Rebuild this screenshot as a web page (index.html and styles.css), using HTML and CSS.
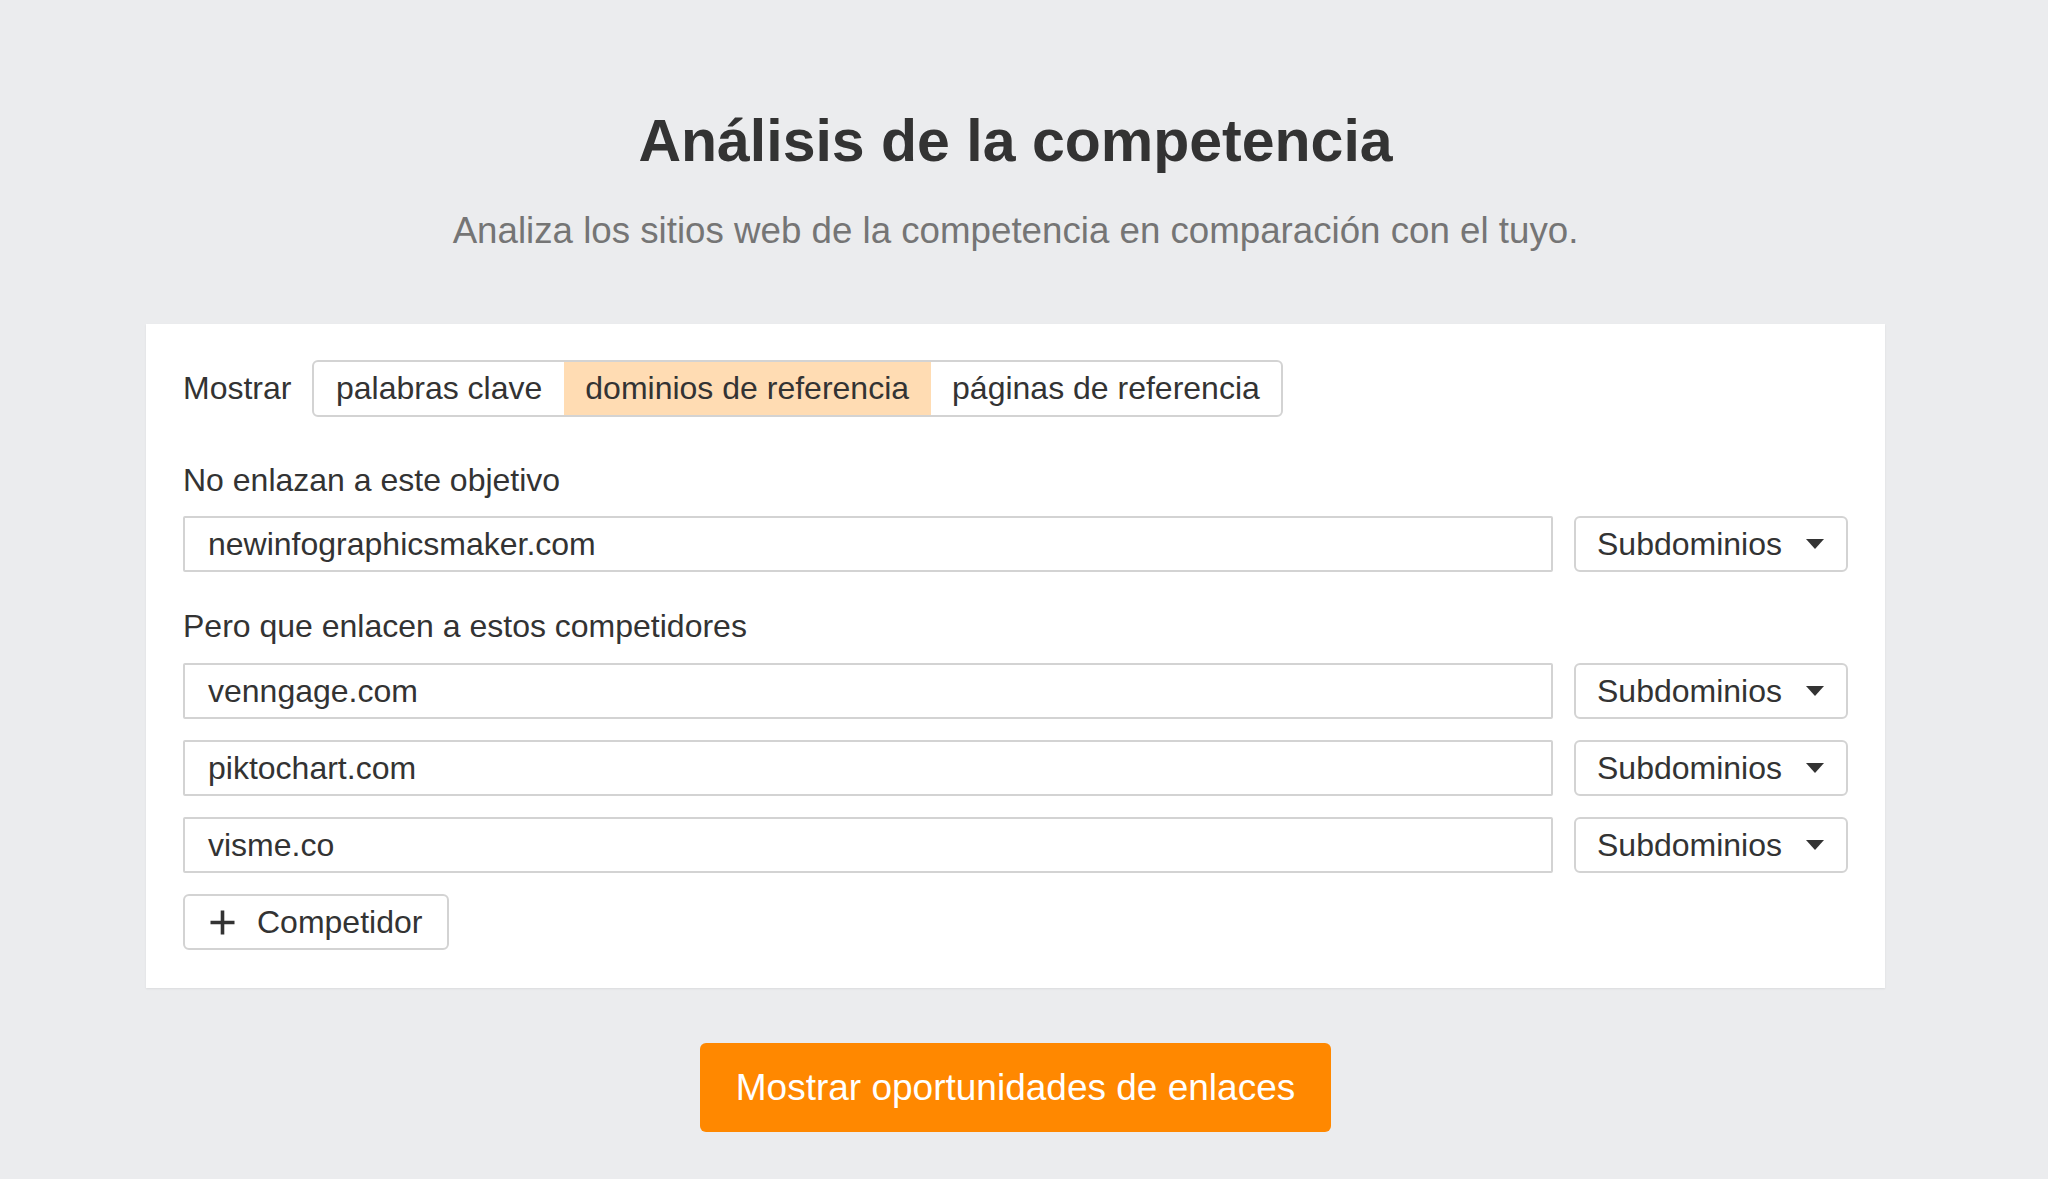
FILE: index.html
```html
<!DOCTYPE html>
<html lang="es">
<head>
<meta charset="utf-8">
<title>Análisis de la competencia</title>
<link rel="stylesheet" href="styles.css">
</head>
<body>
<main class="page">
  <h1 class="title">Análisis de la competencia</h1>
  <p class="subtitle">Analiza los sitios web de la competencia en comparación con el tuyo.</p>

  <section class="card">
    <div class="show-row">
      <span class="show-label">Mostrar</span>
      <div class="tabs">
        <span class="tab">palabras clave</span>
        <span class="tab tab-active">dominios de referencia</span>
        <span class="tab">páginas de referencia</span>
      </div>
    </div>

    <div class="label label-first">No enlazan a este objetivo</div>
    <div class="row">
      <div class="field">newinfographicsmaker.com</div>
      <div class="select">
        <span>Subdominios</span>
        <svg class="caret" width="18" height="10" viewBox="0 0 18 10"><polygon points="0,0 18,0 9,10" fill="#333"/></svg>
      </div>
    </div>

    <div class="label label-second">Pero que enlacen a estos competidores</div>
    <div class="rows">
      <div class="row">
        <div class="field">venngage.com</div>
        <div class="select">
          <span>Subdominios</span>
          <svg class="caret" width="18" height="10" viewBox="0 0 18 10"><polygon points="0,0 18,0 9,10" fill="#333"/></svg>
        </div>
      </div>
      <div class="row">
        <div class="field">piktochart.com</div>
        <div class="select">
          <span>Subdominios</span>
          <svg class="caret" width="18" height="10" viewBox="0 0 18 10"><polygon points="0,0 18,0 9,10" fill="#333"/></svg>
        </div>
      </div>
      <div class="row">
        <div class="field">visme.co</div>
        <div class="select">
          <span>Subdominios</span>
          <svg class="caret" width="18" height="10" viewBox="0 0 18 10"><polygon points="0,0 18,0 9,10" fill="#333"/></svg>
        </div>
      </div>
      <div class="add-row">
        <button class="add-btn" type="button">
          <svg class="plus" width="27" height="27" viewBox="0 0 27 27"><path d="M13.5 1.5v24M1.5 13.5h24" stroke="#333" stroke-width="3.6" fill="none"/></svg>
          <span>Competidor</span>
        </button>
      </div>
    </div>
  </section>

  <button class="cta" type="button">Mostrar oportunidades de enlaces</button>
</main>
</body>
</html>
```

FILE: styles.css
```css
html, body {
  margin: 0;
  padding: 0;
  background: #ebecee;
}

body {
  font-family: "Liberation Sans", Arial, Helvetica, sans-serif;
  color: #333333;
}

.page {
  width: 2031px;
  min-height: 1179px;
  box-sizing: border-box;
  padding-top: 106px;
  display: flex;
  flex-direction: column;
  align-items: center;
}

.title {
  margin: 0;
  font-size: 59px;
  line-height: 71px;
  font-weight: 700;
  color: #333333;
}

.subtitle {
  margin: 33px 0 0;
  font-size: 36.7px;
  line-height: 42px;
  color: #757575;
}

.card {
  margin-top: 72px;
  width: 1739px;
  box-sizing: border-box;
  padding: 36px 37px 38px;
  background: #ffffff;
  box-shadow: 0 1px 2px rgba(0, 0, 0, 0.07);
  font-size: 32px;
  line-height: 37px;
}

.show-row {
  display: flex;
  align-items: center;
  gap: 21px;
}

.show-label {
  color: #333333;
}

.tabs {
  display: flex;
  height: 57px;
  box-sizing: border-box;
  border: 2px solid #d3d3d3;
  border-radius: 6px;
  overflow: hidden;
}

.tab {
  display: flex;
  align-items: center;
  padding: 0 21.5px;
  color: #333333;
}

.tab-active {
  background: #ffdcb3;
}

.label {
  color: #333333;
}

.label-first {
  margin-top: 45px;
  margin-bottom: 17px;
}

.label-second {
  margin-top: 36px;
  margin-bottom: 18px;
}

.rows {
  display: flex;
  flex-direction: column;
  gap: 21px;
}

.row {
  display: flex;
  gap: 21px;
}

.field {
  flex: 1;
  height: 56px;
  box-sizing: border-box;
  border: 2px solid #d3d3d3;
  border-radius: 2px;
  padding: 0 23px;
  display: flex;
  align-items: center;
  color: #333333;
}

.select {
  width: 274px;
  height: 56px;
  box-sizing: border-box;
  border: 2px solid #d3d3d3;
  border-radius: 6px;
  padding: 0 22px 0 21px;
  display: flex;
  align-items: center;
  justify-content: space-between;
  color: #333333;
}

.caret {
  display: block;
}

.add-row {
  display: flex;
}

.add-btn {
  height: 56px;
  width: 266px;
  box-sizing: border-box;
  border: 2px solid #d3d3d3;
  border-radius: 6px;
  background: #ffffff;
  padding: 0 0 0 24px;
  display: flex;
  align-items: center;
  gap: 21px;
  font-family: inherit;
  font-size: 32px;
  color: #333333;
  cursor: pointer;
}

.plus {
  display: block;
}

.cta {
  margin-top: 55px;
  width: 631px;
  height: 89px;
  border: none;
  border-radius: 6px;
  background: #ff8800;
  color: #ffffff;
  font-family: inherit;
  font-size: 37px;
  cursor: pointer;
}
```
